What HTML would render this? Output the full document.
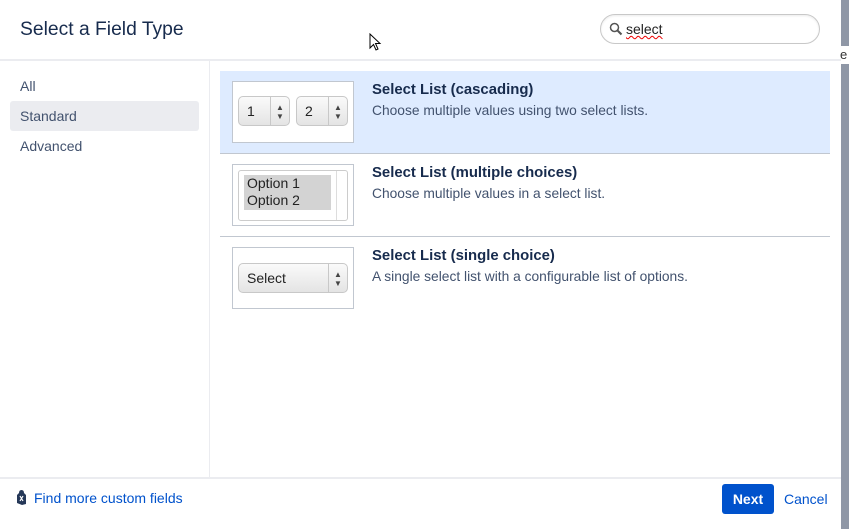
<!DOCTYPE html>
<html><head><style>
*{box-sizing:border-box;margin:0;padding:0}
body{width:849px;height:529px;overflow:hidden;background:#fff;font-family:"Liberation Sans",sans-serif;position:relative;color:#172b4d}
.strip{position:absolute;left:841px;top:0;width:8px;height:529px;background:#8f97a6}
.strip span{position:absolute;left:-1px;top:46px;font-size:13px;color:#333;background:#fff;width:9px;height:18px;line-height:18px;overflow:hidden}
.title{position:absolute;left:20px;top:19px;font-size:19.3px;color:#172b4d}
.search{position:absolute;left:600px;top:14px;width:220px;height:30px;border:1px solid #c8c8c8;border-radius:15px;box-shadow:inset 0 1px 2px rgba(0,0,0,.08)}
.search .t{position:absolute;left:25px;top:6px;font-size:14px;color:#222;text-decoration:underline wavy #e00;text-decoration-thickness:1px}
.hr{position:absolute;left:0;width:841px;height:2px;background:#ebecf0}
.side{position:absolute;left:209px;top:61px;width:1px;height:416px;background:#ebecf0}
.nav{position:absolute;left:10px;width:189px;height:30px;padding-left:10px;line-height:30px;font-size:14px;color:#42526e;border-radius:3px}
.row{position:absolute;left:220px;width:610px;height:83px;border-bottom:1px solid #c1c7d0}
.row.sel{background:#deebff}
.thumb{position:absolute;left:12px;top:10px;width:122px;height:62px;background:#fff;border:1px solid #c1c7d0}
.row h3{position:absolute;left:152px;top:11px;font-size:14.9px;font-weight:bold;color:#172b4d}
.row p{position:absolute;left:152px;top:32px;font-size:13.8px;color:#42526e}
.sb{position:absolute;height:30px;border:1px solid #c8c8c8;border-radius:5px;background:linear-gradient(#fafafa,#e4e4e4);font-size:14px;color:#222;line-height:28px;padding-left:8px}
.sb i{position:absolute;right:0;top:0;width:19px;height:28px;border-left:1px solid #c8c8c8;font-style:normal;font-size:8px;line-height:9px;text-align:center;padding-top:6px;color:#444}
.foot{position:absolute;left:34px;top:490px;font-size:14px;color:#0052cc}
.next{position:absolute;left:722px;top:484px;width:52px;height:30px;background:#0052cc;border-radius:3px;color:#fff;font-weight:bold;font-size:14px;text-align:center;line-height:30px}
.cancel{position:absolute;left:784px;top:491px;font-size:14px;color:#0052cc}
</style></head><body>
<div class="strip"><span>e</span></div>
<div class="title">Select a Field Type</div>
<svg style="position:absolute;left:369px;top:33px" width="14" height="20" viewBox="0 0 14 20"><path d="M1 1 L1 15 L4.5 11.5 L7 17 L9 16 L6.5 10.5 L11 10.5 Z" fill="#fff" stroke="#000" stroke-width="1"/></svg>
<div class="search"><svg style="position:absolute;left:8px;top:7px" width="14" height="14" viewBox="0 0 14 14"><circle cx="5.5" cy="5.5" r="4" fill="none" stroke="#555" stroke-width="1.5"/><path d="M8.5 8.5 L12.5 12.5" stroke="#555" stroke-width="2"/></svg><span class="t">select</span></div>
<div class="hr" style="top:59px"></div>
<div class="side"></div>
<div class="nav" style="top:71px">All</div>
<div class="nav" style="top:101px;background:#ebecf0">Standard</div>
<div class="nav" style="top:131px">Advanced</div>
<div class="row sel" style="top:71px">
<div class="thumb"><div class="sb" style="left:5px;top:14px;width:52px">1<i>▲<br>▼</i></div><div class="sb" style="left:63px;top:14px;width:52px">2<i>▲<br>▼</i></div></div>
<h3>Select List (cascading)</h3><p>Choose multiple values using two select lists.</p></div>
<div class="row" style="top:154px">
<div class="thumb"><div style="position:absolute;left:5px;top:5px;width:110px;height:51px;border:1px solid #ccc;border-radius:3px;background:#fff"><div style="position:absolute;left:5px;top:4px;width:87px;height:35px;background:#d3d3d3;font-size:14px;line-height:17px;padding-left:3px;color:#222">Option 1<br>Option 2</div><div style="position:absolute;left:97px;top:0;width:1px;height:49px;background:#ddd"></div></div></div>
<h3>Select List (multiple choices)</h3><p>Choose multiple values in a select list.</p></div>
<div class="row" style="top:237px;border-bottom:none">
<div class="thumb"><div class="sb" style="left:5px;top:15px;width:110px">Select<i>▲<br>▼</i></div></div>
<h3>Select List (single choice)</h3><p>A single select list with a configurable list of options.</p></div>
<div class="hr" style="top:477px"></div>
<svg style="position:absolute;left:16px;top:489px" width="11" height="17" viewBox="0 0 11 17"><path d="M3 4 Q3 1 5.5 1 Q8 1 8 4 L10 6 L10 15 L6 16 L1 14 L1 6 Z" fill="#253858"/><path d="M4 7 L7 12 M7 7 L4 12" stroke="#fff" stroke-width="1.2"/></svg>
<div class="foot">Find more custom fields</div>
<div class="next">Next</div>
<div class="cancel">Cancel</div>
</body></html>
